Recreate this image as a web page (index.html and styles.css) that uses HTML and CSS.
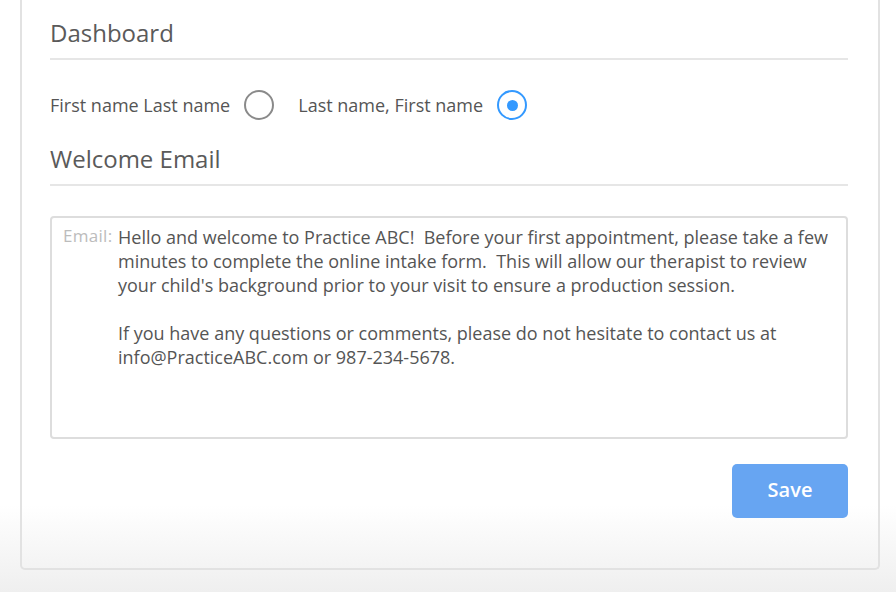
FILE: index.html
```html
<!DOCTYPE html>
<html>
<head>
<meta charset="utf-8">
<link rel="stylesheet" href="styles.css">
</head>
<body>
<div class="card">
  <h2 class="section-title">Dashboard</h2>
  <div class="radio-row">
    <label class="radio-option"><span class="radio-label">First name Last name</span><span class="radio"></span></label>
    <label class="radio-option"><span class="radio-label">Last name, First name</span><span class="radio checked"></span></label>
  </div>
  <h2 class="section-title second">Welcome Email</h2>
  <div class="email-box">
    <span class="email-label">Email:</span>
    <div class="email-text">Hello and welcome to Practice ABC!  Before your first appointment, please take a few
minutes to complete the online intake form.  This will allow our therapist to review
your child's background prior to your visit to ensure a production session.

If you have any questions or comments, please do not hesitate to contact us at
info@PracticeABC.com or 987-234-5678.</div>
  </div>
  <div class="actions">
    <button class="save-btn">Save</button>
  </div>
</div>
</body>
</html>
```
FILE: styles.css
```css
html, body {
  margin: 0;
  padding: 0;
}
body {
  width: 896px;
  height: 592px;
  overflow: hidden;
  font-family: "Open Sans", "Noto Sans", sans-serif;
  color: #555;
  background: linear-gradient(to bottom, #ffffff 0, #ffffff 505px, #efefef 592px);
  padding-left: 20px;
  box-sizing: border-box;
}
.card {
  width: 860px;
  height: 570px;
  box-sizing: border-box;
  border: 2px solid #e2e2e2;
  border-top: 0;
  border-radius: 0 0 5px 5px;
  padding: 16px 30px 0 28px;
}
.section-title {
  margin: 0;
  font-size: 24px;
  font-weight: 400;
  line-height: 32px;
  color: #5a5a5a;
  padding-top: 1px;
  padding-bottom: 9px;
  border-bottom: 2px solid #e6e6e6;
}
.section-title.second {
  margin-top: 22px;
}
.radio-row {
  display: flex;
  align-items: center;
  margin-top: 30px;
  height: 30px;
  gap: 24px;
}
.radio-option {
  display: flex;
  align-items: center;
  gap: 14px;
  font-size: 18px;
  color: #555;
}
.radio {
  width: 30px;
  height: 30px;
  box-sizing: border-box;
  border: 2px solid #8a8a8a;
  border-radius: 50%;
  display: flex;
  align-items: center;
  justify-content: center;
}
.radio.checked {
  border-color: #3399ff;
}
.radio.checked::after {
  content: "";
  width: 11px;
  height: 11px;
  border-radius: 50%;
  background: #3399ff;
}
.email-box {
  margin-top: 30px;
  height: 223px;
  box-sizing: border-box;
  border: 2px solid #dddddd;
  border-radius: 4px;
  padding: 7px 10px 0 11px;
  display: flex;
  gap: 4px;
}
.email-label {
  font-size: 17px;
  letter-spacing: 0.3px;
  line-height: 22px;
  color: #bcbcbc;
  width: 51px;
  flex: none;
}
.email-text {
  font-size: 18px;
  line-height: 24px;
  white-space: pre;
  color: #555;
}
.actions {
  display: flex;
  justify-content: flex-end;
  margin-top: 25px;
}
.save-btn {
  width: 116px;
  height: 54px;
  border: 0;
  border-radius: 5px;
  background: #67a5f2;
  color: #fff;
  font-family: "Open Sans", "Noto Sans", sans-serif;
  font-size: 20px;
  font-weight: 600;
  line-height: 26px;
  padding: 0 0 2px;
}
```
